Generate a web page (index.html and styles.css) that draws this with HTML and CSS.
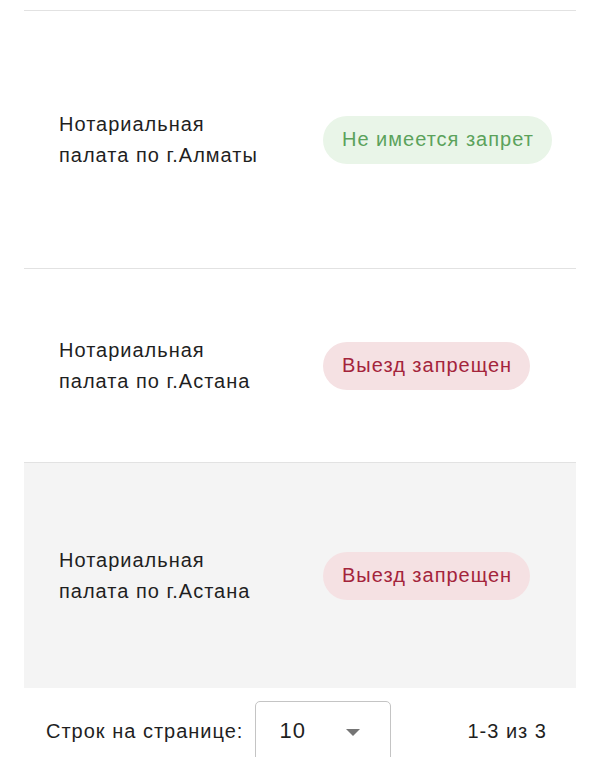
FILE: index.html
```html
<!DOCTYPE html>
<html lang="ru">
<head>
<meta charset="utf-8">
<link rel="stylesheet" href="styles.css">
</head>
<body>
<div class="table">
  <div class="row row-1">
    <div class="name">Нотариальная палата по г.Алматы</div>
    <div class="status"><span class="pill pill-ok">Не имеется запрет</span></div>
  </div>
  <div class="row row-2">
    <div class="name">Нотариальная палата по г.Астана</div>
    <div class="status"><span class="pill pill-ban">Выезд запрещен</span></div>
  </div>
  <div class="row row-3 hover">
    <div class="name">Нотариальная палата по г.Астана</div>
    <div class="status"><span class="pill pill-ban">Выезд запрещен</span></div>
  </div>
</div>
<div class="pager">
  <span class="label">Строк на странице:</span>
  <div class="select">
    <span class="value">10</span>
    <svg class="arrow" width="14" height="7" viewBox="0 0 14 7"><path d="M0 0 L14 0 L7 7 Z" fill="#757575"/></svg>
  </div>
  <span class="range">1-3 из 3</span>
</div>
</body>
</html>
```
FILE: styles.css
```css
html, body {
  margin: 0;
  padding: 0;
  background: #ffffff;
  font-family: "Liberation Sans", Arial, sans-serif;
  color: #1f1f1f;
}
.table {
  margin: 10px 24px 0 24px;
  border-top: 1px solid #e2e2e2;
}
.row {
  box-sizing: border-box;
  display: flex;
  align-items: center;
  padding-left: 35px;
  border-bottom: 1px solid #e2e2e2;
}
.row-1 { height: 258px; }
.row-2 { height: 194px; }
.row-3 { height: 225px; border-bottom: none; }
.hover { background: #f4f4f4; }
.name {
  width: 264px;
  padding-right: 54px;
  box-sizing: border-box;
  font-size: 20px;
  letter-spacing: 1px;
  line-height: 31px;
  color: #1f1f1f;
}
.pill {
  display: inline-flex;
  align-items: center;
  height: 48px;
  padding: 0 18px 0 19px;
  border-radius: 24px;
  font-size: 20px;
  letter-spacing: 1px;
}
.pill-ok {
  background: #e9f5e8;
  color: #5ba25b;
}
.pill-ban {
  background: #f5e1e3;
  color: #a4243b;
}
.pager {
  display: flex;
  align-items: flex-start;
  height: 69px;
  overflow: hidden;
  padding-left: 46px;
  box-sizing: border-box;
}
.label {
  font-size: 20px;
  letter-spacing: 1px;
  margin-top: 32px;
  color: #1f1f1f;
}
.select {
  box-sizing: border-box;
  margin-top: 13px;
  margin-left: 12px;
  width: 136px;
  height: 70px;
  border: 1px solid #c4c4c4;
  border-radius: 5px;
  display: flex;
  align-items: flex-start;
  padding: 16px 0 0 23px;
}
.value {
  font-size: 22px;
  letter-spacing: 1px;
  color: #1f1f1f;
}
.arrow {
  margin-left: 40px;
  margin-top: 11px;
}
.range {
  font-size: 20px;
  letter-spacing: 1px;
  margin-top: 32px;
  margin-left: 76px;
  color: #1f1f1f;
}
```
